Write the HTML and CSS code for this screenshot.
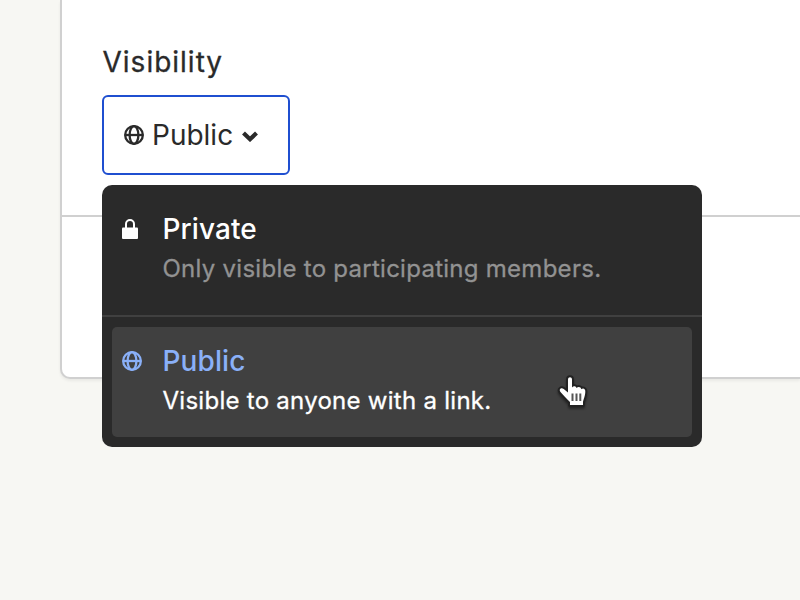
FILE: index.html
```html
<!DOCTYPE html>
<html lang="en">
<head>
    <meta charset="UTF-8">
    <meta name="viewport" content="width=device-width, initial-scale=1.0">
    <title>Visibility</title>
    <link rel="stylesheet" href="styles.css">
</head>
<body>
    <svg class="sprite" width="0" height="0">
        <symbol id="globe" viewBox="0 0 20 20">
            <g fill="none" stroke="currentColor" stroke-width="2.3">
                <circle cx="10" cy="10" r="8.85"/>
                <ellipse cx="10" cy="10" rx="4.4" ry="8.85"/>
                <path d="M1 10h18"/>
            </g>
        </symbol>
    </svg>

    <div class="card">
        <div class="section">
            <div class="label">Visibility</div>
            <div class="dropdown">
                <button class="dropdown-button">
                    <svg class="icon-globe"><use href="#globe"/></svg>
                    <span class="value">Public</span>
                    <svg class="icon-chevron" viewBox="0 0 16 11"><path d="M1.5 2L8 8.2L14.5 2" fill="none" stroke="currentColor" stroke-width="4.2"/></svg>
                </button>
                <div class="menu">
                    <div class="option">
                        <svg class="icon-lock" viewBox="0 0 16 20"><path d="M4 9V5a4 4 0 0 1 8 0v4" fill="none" stroke="currentColor" stroke-width="2"/><rect y="8.5" width="16" height="11.5" rx="1" fill="currentColor"/></svg>
                        <div class="option-text">
                            <div class="title">Private</div>
                            <div class="description">Only visible to participating members.</div>
                        </div>
                    </div>
                    <div class="divider"></div>
                    <div class="option selected">
                        <svg class="icon-globe"><use href="#globe"/></svg>
                        <div class="option-text">
                            <div class="title">Public</div>
                            <div class="description">Visible to anyone with a link.</div>
                        </div>
                        <svg class="cursor" viewBox="0 0 34 38">
                            <path class="cursor-hand" d="M11 5.5C11 2.5 15 2.5 15 5.5V13.5C16.5 11.5 19 12 19.5 14C21.3 12.3 24 13 24.3 15.2C26.3 13.8 28.7 15 28.3 18C28 23 26.5 25 26 28V31H13V28C9.5 25 6.5 21 3.5 18C1.5 15.5 4 13.2 6.7 15L11 18.5Z"/>
                            <path class="cursor-lines" d="M15.5 19.5v7.5M19.5 19.5v7.5M23.3 19.5v7.5"/>
                        </svg>
                    </div>
                </div>
            </div>
        </div>
    </div>
</body>
</html>
```

FILE: styles.css
```css
* {
    box-sizing: border-box;
}
body {
    margin: 0;
    padding-left: 60px;
    height: 100vh;
    overflow: hidden;
    background: #f7f7f3;
    color: #2a2a2a;
    font-family: Inter, sans-serif;
}
svg {
    flex-shrink: 0;
}
.sprite {
    position: absolute;
}
.card {
    height: 379px;
    background: #fff;
    border: 2px solid #d0d0d0;
    border-width: 0 0 2px 2px;
    border-radius: 0 0 0 10px;
    box-shadow: 0 2px 3px rgba(0, 0, 0, 0.06);
}
.section {
    height: 217px;
    padding: 45px 40px 0;
    border-bottom: 2px solid #d0d0d0;
}
.label {
    height: 50px;
    padding-left: 0.5px;
    font-size: 28px;
    line-height: 34px;
    letter-spacing: 1px;
    -webkit-text-stroke: 0.3px;
}
.dropdown {
    position: relative;
    width: 600px;
}
.dropdown-button {
    display: flex;
    align-items: center;
    width: 188px;
    height: 80px;
    padding: 0 20px;
    border: 2px solid #1f4fd0;
    border-radius: 6px;
    background: #fff;
    color: inherit;
    font: inherit;
    font-size: 28px;
}
.value {
    margin: 0 9px 0 8px;
}
.icon-globe {
    width: 20px;
    height: 20px;
}
.icon-chevron {
    width: 16px;
    height: 11px;
    margin-top: 2px;
}
.icon-lock {
    width: 16px;
    height: 20px;
    margin-right: 4px;
}
/* menu opens over the rest of the card */
.menu {
    position: absolute;
    top: 90px;
    left: 0;
    width: 600px;
    height: 262px;
    border-radius: 10px;
    background: #2a2a2a;
    color: #fff;
}
.divider {
    height: 2px;
    margin-bottom: 10px;
    background: #404040;
}
.option {
    display: flex;
    height: 130px;
    padding: 25px 20px 0;
}
.option svg {
    margin-top: 9px;
}
.option-text {
    margin-left: 20.5px;
}
.title {
    font-size: 28px;
    font-weight: 500;
    line-height: 39px;
    letter-spacing: 0.1px;
}
.description {
    font-size: 24px;
    line-height: 40px;
    letter-spacing: 0.27px;
    white-space: nowrap;
    color: #929292;
    -webkit-text-stroke: 0.3px;
}
.selected {
    position: relative;
    height: 110px;
    margin: 0 10px;
    padding: 15px 10px 0;
    border-radius: 5px;
    background: #404040;
}
.selected .title,
.selected .icon-globe {
    color: #8ab0f8;
}
.selected .description {
    color: #fff;
}
.option .cursor {
    position: absolute;
    top: 47px;
    left: 445px;
    width: 34px;
    height: 38px;
    margin: 0;
    overflow: visible;
    filter: drop-shadow(0 2px 1px rgba(0, 0, 0, 0.4));
}
.cursor-hand {
    fill: #fff;
    stroke: #222;
    stroke-width: 4;
    stroke-linejoin: round;
    paint-order: stroke;
}
.cursor-lines {
    fill: none;
    stroke: #555;
    stroke-width: 2;
}
```
